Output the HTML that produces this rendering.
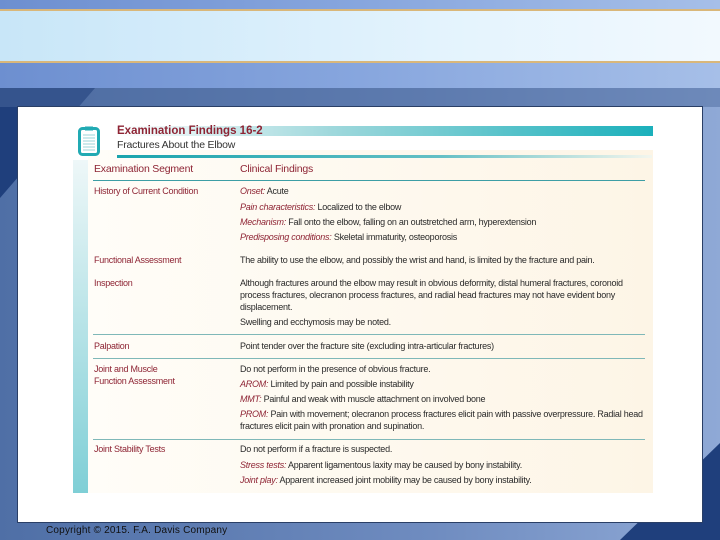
<!DOCTYPE html>
<html><head><meta charset="utf-8"><style>
*{margin:0;padding:0;box-sizing:border-box}
body{width:720px;height:540px;overflow:hidden;position:relative;font-family:"Liberation Sans",sans-serif;background:#6f8cbf}
.a{position:absolute;white-space:nowrap}
.t{font-size:9px;letter-spacing:-0.25px;color:#2a2a2a}
.r{color:#8e2434}
.i{font-style:italic;color:#8e2434}
.ln{position:absolute;height:1px;background:#7fb8b8;left:93px;width:552px}
</style></head><body>
<div class="a" style="left:0;top:0;width:720px;height:88px;background:linear-gradient(90deg,#6d8fd0,#87a6de 50%,#a6bfe8)"></div>
<div class="a" style="left:0;top:9px;width:720px;height:54px;background:linear-gradient(90deg,#c8e6f8,#e3f3fd 60%,#f2f9fe);border-top:2px solid #d9b77a;border-bottom:2px solid #d9b77a"></div>
<div class="a" style="left:0;top:88px;width:720px;height:452px;background:linear-gradient(90deg,#4f6fa6,#6f8cc0 60%,#8fa9d6)"></div>
<svg class="a" style="left:0;top:88px" width="720" height="452"><polygon points="0,0 95,0 0,110" fill="#1f3f7c"/><polygon points="720,355 720,452 620,452" fill="#1f3f7c"/><rect x="0" y="0" width="720" height="19" fill="#4c6a9e" opacity="0.5"/></svg>
<div class="a" style="left:17px;top:106px;width:686px;height:417px;background:#fff;border:1px solid #2a3f66"></div>
<div class="a" style="left:88px;top:150px;width:565px;height:343px;background:linear-gradient(90deg,#fffdf8,#fdf5e6)"></div>
<div class="a" style="left:73px;top:160px;width:15px;height:333px;background:linear-gradient(180deg,#eef7f8,#7fcfd6)"></div>
<div class="a" style="left:117px;top:126px;width:536px;height:10px;background:linear-gradient(90deg,#ffffff,#9fd8dc 40%,#1bb0bb)"></div>
<div class="a" style="left:117px;top:155px;width:535px;height:3px;background:linear-gradient(90deg,#1aa4ad,#64bfc5 60%,#f3f6ee)"></div>
<svg class="a" style="left:78px;top:126px" width="24" height="31"><rect x="1.5" y="2.5" width="19" height="26" rx="3" fill="#fff" stroke="#21aab3" stroke-width="3"/><rect x="7" y="0.5" width="8" height="4" fill="#21aab3"/><g stroke="#9bd5da" stroke-width="1"><line x1="5" y1="9" x2="17" y2="9"/><line x1="5" y1="12" x2="17" y2="12"/><line x1="5" y1="15" x2="17" y2="15"/><line x1="5" y1="18" x2="17" y2="18"/><line x1="5" y1="21" x2="17" y2="21"/><line x1="5" y1="24" x2="17" y2="24"/></g></svg>
<div class="a r" style="left:117px;top:125px;font-size:11.5px;font-weight:bold;letter-spacing:0px">Examination Findings 16-2</div>
<div class="a" style="left:117px;top:139px;font-size:10.5px;letter-spacing:-0.2px;color:#333">Fractures About the Elbow</div>
<div class="a r" style="left:94px;top:163px;font-size:10.5px;letter-spacing:-0.2px">Examination Segment</div>
<div class="a r" style="left:240px;top:163px;font-size:10.5px;letter-spacing:-0.2px">Clinical Findings</div>
<div class="ln" style="top:180px;background:#3d9ea5"></div>
<div class="a t r" style="left:94px;top:186px">History of Current Condition</div>
<div class="a t" style="left:240px;top:186px"><span class="i">Onset:</span> Acute</div>
<div class="a t" style="left:240px;top:202px"><span class="i">Pain characteristics:</span> Localized to the elbow</div>
<div class="a t" style="left:240px;top:217px"><span class="i">Mechanism:</span> Fall onto the elbow, falling on an outstretched arm, hyperextension</div>
<div class="a t" style="left:240px;top:232px"><span class="i">Predisposing conditions:</span> Skeletal immaturity, osteoporosis</div>
<div class="a t r" style="left:94px;top:255px">Functional Assessment</div>
<div class="a t" style="left:240px;top:255px">The ability to use the elbow, and possibly the wrist and hand, is limited by the fracture and pain.</div>
<div class="a t r" style="left:94px;top:278px">Inspection</div>
<div class="a t" style="left:240px;top:278px">Although fractures around the elbow may result in obvious deformity, distal humeral fractures, coronoid</div>
<div class="a t" style="left:240px;top:290px">process fractures, olecranon process fractures, and radial head fractures may not have evident bony</div>
<div class="a t" style="left:240px;top:302px">displacement.</div>
<div class="a t" style="left:240px;top:317px">Swelling and ecchymosis may be noted.</div>
<div class="ln" style="top:334px"></div>
<div class="a t r" style="left:94px;top:341px">Palpation</div>
<div class="a t" style="left:240px;top:341px">Point tender over the fracture site (excluding intra-articular fractures)</div>
<div class="ln" style="top:358px"></div>
<div class="a t r" style="left:94px;top:364px">Joint and Muscle</div>
<div class="a t r" style="left:94px;top:376px">Function Assessment</div>
<div class="a t" style="left:240px;top:364px">Do not perform in the presence of obvious fracture.</div>
<div class="a t" style="left:240px;top:379px"><span class="i">AROM:</span> Limited by pain and possible instability</div>
<div class="a t" style="left:240px;top:394px"><span class="i">MMT:</span> Painful and weak with muscle attachment on involved bone</div>
<div class="a t" style="left:240px;top:409px"><span class="i">PROM:</span> Pain with movement; olecranon process fractures elicit pain with passive overpressure. Radial head</div>
<div class="a t" style="left:240px;top:421px">fractures elicit pain with pronation and supination.</div>
<div class="ln" style="top:439px"></div>
<div class="a t r" style="left:94px;top:444px">Joint Stability Tests</div>
<div class="a t" style="left:240px;top:444px">Do not perform if a fracture is suspected.</div>
<div class="a t" style="left:240px;top:460px"><span class="i">Stress tests:</span> Apparent ligamentous laxity may be caused by bony instability.</div>
<div class="a t" style="left:240px;top:475px"><span class="i">Joint play:</span> Apparent increased joint mobility may be caused by bony instability.</div>
<div class="a" style="left:46px;top:525px;font-size:10px;letter-spacing:0.2px;color:#111">Copyright © 2015. F.A. Davis Company</div>
</body></html>
